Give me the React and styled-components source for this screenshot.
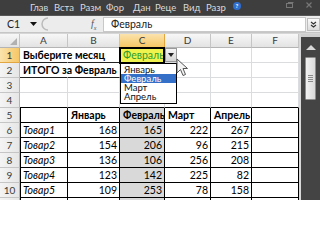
import React from 'react';
import styled, { createGlobalStyle } from 'styled-components';

const GlobalStyle = createGlobalStyle`
  html, body {
    margin: 0;
    padding: 0;
    width: 320px;
    height: 200px;
    overflow: hidden;
    background: #fff;
    font-family: Lato, 'Liberation Sans', Arial, sans-serif;
  }
`;

const Window = styled.div`
  width: 320px;
  height: 200px;
  display: flex;
  flex-direction: column;
  overflow: hidden;
`;

const TitleBar = styled.div`
  height: 16px;
  flex: none;
  background: #3e3e3e;
  border-bottom: 1px solid #575757;
  box-sizing: border-box;
  display: flex;
  align-items: center;
  padding-left: 30px;
  color: #d9d9d9;
  font-size: 9.5px;
`;

const Tab = styled.span`
  width: ${(p) => p.$w}px;
  white-space: nowrap;
`;

const HelpIcon = styled.span`
  width: 8px;
  height: 8px;
  border-radius: 50%;
  background: #2f6fd0;
  color: #fff;
  font-size: 6px;
  font-weight: 700;
  display: flex;
  align-items: center;
  justify-content: center;
  margin-left: 2px;
  margin-top: -4px;
`;

const WinControls = styled.div`
  margin-left: auto;
  margin-right: 8px;
  margin-top: -5px;
  display: flex;
  gap: 12px;
  align-items: center;
`;

const FormulaBar = styled.div`
  height: 17px;
  flex: none;
  background: #ececec;
  display: flex;
  align-items: center;
  box-sizing: border-box;
  border-bottom: 1px solid #c6c6c6;
  font-size: 10.5px;
`;

const NameBox = styled.div`
  width: 40px;
  height: 15px;
  display: flex;
  align-items: center;
  justify-content: space-between;
  padding: 0 3px 0 7px;
  box-sizing: border-box;
  color: #222;
`;

const Fx = styled.span`
  font-family: 'Liberation Serif', serif;
  font-style: italic;
  font-size: 10px;
  color: #555;
  margin-left: 41px;
  width: 12px;
`;

const FormulaInput = styled.div`
  width: 203px;
  height: 15px;
  background: #fff;
  border: 1px solid #c8c8c8;
  box-sizing: border-box;
  padding-left: 7px;
  line-height: 13px;
  color: #222;
`;

const ExpandBtn = styled.div`
  width: 13px;
  height: 13px;
  margin-left: 1px;
  background: linear-gradient(#fafafa, #dcdcdc);
  border: 1px solid #bdbdbd;
  box-sizing: border-box;
  display: flex;
  align-items: center;
  justify-content: center;
`;

const Body = styled.div`
  flex: 1;
  display: flex;
  padding-top: 1px;
  background: #d6d6d6;
`;

const Sheet = styled.div`
  position: relative;
  width: 299px;
  display: grid;
  grid-template-columns: 20px 48px 52px 45px 46px 41px 47px;
  grid-auto-rows: 15px;
  grid-template-rows: 14px;
  align-content: start;
  background: #fff;
  font-size: 10.5px;
`;

const ColHead = styled.div`
  box-sizing: border-box;
  border-right: 1px solid ${(p) => (p.$active ? '#e2a741' : '#c5c5c5')};
  border-bottom: 1px solid ${(p) => (p.$active ? '#e2a741' : '#b4b4b4')};
  background: ${(p) =>
    p.$active
      ? 'linear-gradient(#fbe3ad, #f6c766)'
      : 'linear-gradient(#f7f7f7, #e3e3e3)'};
  color: #3a3a3a;
  text-align: center;
  line-height: 13px;
  font-size: 10px;
  position: relative;
`;

const Corner = styled.span`
  position: absolute;
  right: 2px;
  bottom: 2px;
  width: 0;
  height: 0;
  border-left: 7px solid transparent;
  border-bottom: 7px solid #b1b1b1;
`;

const RowHead = styled.div`
  box-sizing: border-box;
  border-right: 1px solid ${(p) => (p.$active ? '#e2a741' : '#b4b4b4')};
  border-bottom: 1px solid ${(p) => (p.$active ? '#e2a741' : '#c5c5c5')};
  background: ${(p) =>
    p.$active
      ? 'linear-gradient(90deg, #fbe3ad, #f6c766)'
      : 'linear-gradient(90deg, #f4f4f4, #e6e6e6)'};
  color: #3a3a3a;
  text-align: center;
  line-height: 14px;
  font-size: 10px;
`;

const Cell = styled.div`
  box-sizing: border-box;
  border-right: 1px solid ${(p) => p.$rc || '#dadcdd'};
  border-bottom: 1px solid ${(p) => p.$bc || '#dadcdd'};
  box-shadow: ${(p) => (p.$lc ? `inset 1px 0 0 ${p.$lc}` : 'none')};
  background: ${(p) => p.$fill || '#fff'};
  color: ${(p) => p.$color || '#000'};
  font-weight: ${(p) => (p.$bold ? 700 : 400)};
  font-style: ${(p) => (p.$italic ? 'italic' : 'normal')};
  text-align: ${(p) => p.$align || 'left'};
  padding: 0 2px 0 3px;
  line-height: 15px;
  white-space: nowrap;
  overflow: ${(p) => (p.$spill ? 'visible' : 'hidden')};
  position: ${(p) => (p.$spill ? 'relative' : 'static')};
  z-index: ${(p) => (p.$spill ? 1 : 'auto')};
`;

const Selection = styled.div`
  position: absolute;
  left: 119px;
  top: 13px;
  width: 46px;
  height: 17px;
  border: 2px solid #000;
  box-sizing: border-box;
  pointer-events: none;
`;

const DropBtn = styled.div`
  position: absolute;
  left: 165px;
  top: 14px;
  width: 12px;
  height: 14px;
  box-sizing: border-box;
  border: 1px solid #9a9a9a;
  background: linear-gradient(#f5f5f5, #d4d4d4);
  display: flex;
  align-items: center;
  justify-content: center;
`;

const DropList = styled.div`
  position: absolute;
  left: 120px;
  top: 29px;
  width: 57px;
  height: 41px;
  box-sizing: border-box;
  border: 1px solid #000;
  background: #fff;
  padding-top: 1px;
  font-size: 9.5px;
`;

const DropItem = styled.div`
  height: 9px;
  line-height: 9px;
  padding-left: 3px;
  background: ${(p) => (p.$active ? '#3470c8' : 'transparent')};
  color: ${(p) => (p.$active ? '#fff' : '#111')};
`;

const Cursor = styled.svg`
  position: absolute;
  left: 176px;
  top: 24px;
  z-index: 2;
`;

const Gap = styled.div`
  width: 2px;
  background: #d8d8d8;
`;

const ScrollBar = styled.div`
  width: 19px;
  background: #444;
  display: flex;
  flex-direction: column;
  align-items: center;
  border-top: 3px solid #cfcfcf;
  box-sizing: border-box;
`;

const Arrow = styled.div`
  width: 0;
  height: 0;
  border-left: 5px solid transparent;
  border-right: 5px solid transparent;
  ${(p) =>
    p.$down
      ? 'border-top: 5px solid #d8d8d8; margin-top: auto; margin-bottom: 4px;'
      : 'border-bottom: 5px solid #d8d8d8; margin-top: 8px;'}
`;

const Thumb = styled.div`
  width: 11px;
  height: 43px;
  margin-top: 7px;
  border-radius: 1px;
  background: linear-gradient(90deg, #f1f1f1, #dadada);
  border: 1px solid #8e8e8e;
  box-sizing: border-box;
  display: flex;
  flex-direction: column;
  align-items: center;
  justify-content: center;
  gap: 1px;
`;

const Grip = styled.span`
  width: 5px;
  height: 1px;
  background: #8a8a8a;
`;

const cols = ['A', 'B', 'C', 'D', 'E', 'F'];
// ribbon tabs, widths taken from their spacing on the bar
const tabs = [
  ['Глав', 24],
  ['Вста', 26],
  ['Разм', 26],
  ['Фор', 27],
  ['Дан', 22],
  ['Реце', 28],
  ['Вид', 23],
  ['Разр', 25],
];
const data = [
  ['Товар1', 168, 165, 222, 267],
  ['Товар2', 154, 206, 96, 215],
  ['Товар3', 136, 106, 256, 208],
  ['Товар4', 123, 142, 225, 82],
  ['Товар5', 109, 253, 78, 158],
  ['Товар6', 181, 79, 118, 171],
];
const months = ['Январь', 'Февраль', 'Март', 'Апрель'];

const BLACK = '#000';

function dataRow(values, rowNum) {
  const cells = [];
  for (let c = 0; c < 6; c++) {
    const v = values[c];
    cells.push(
      <Cell
        key={`${rowNum}-${c}`}
        $rc={BLACK}
        $bc={BLACK}
        $lc={c === 0 ? BLACK : undefined}
        $fill={c === 2 ? '#d9d9d9' : undefined}
        $italic={rowNum > 5 && c === 0}
        $bold={rowNum === 5}
        $align={rowNum > 5 && c > 0 ? 'right' : 'left'}
      >
        {v ?? ''}
      </Cell>
    );
  }
  return cells;
}

export default function App() {
  const rows = [];
  for (let r = 1; r <= 11; r++) {
    rows.push(
      <RowHead key={`h${r}`} $active={r === 1}>
        {r}
      </RowHead>
    );
    if (r === 1 || r === 2) {
      rows.push(
        <Cell key={`${r}a`} $bold $spill $rc="transparent" $bc="#222">
          {r === 1 ? 'Выберите месяц' : 'ИТОГО за Февраль'}
        </Cell>,
        <Cell key={`${r}b`} $bc="#222" />,
        r === 1 ? (
          <Cell key="1c" $fill="#f0f24e" $color="#2f9a2f">
            Февраль
          </Cell>
        ) : (
          <Cell key="2c" />
        ),
        <Cell key={`${r}d`} />,
        <Cell key={`${r}e`} />,
        <Cell key={`${r}f`} />
      );
    } else if (r === 3 || r === 4) {
      cols.forEach((c) =>
        rows.push(<Cell key={`${r}${c}`} $bc={r === 4 ? BLACK : undefined} />)
      );
    } else if (r === 5) {
      rows.push(...dataRow(['', ...months, ''], 5));
    } else {
      rows.push(...dataRow(data[r - 6], r));
    }
  }

  return (
    <>
      <GlobalStyle />
      <Window>
        <TitleBar>
          {tabs.map(([t, w]) => (
            <Tab key={t} $w={w}>
              {t}
            </Tab>
          ))}
          <HelpIcon>?</HelpIcon>
          <WinControls>
            <svg width="8" height="6" viewBox="0 0 8 6">
              <rect x="0.5" y="1.5" width="6" height="4" fill="none" stroke="#777" />
              <line x1="2" y1="0.5" x2="7.5" y2="0.5" stroke="#777" />
            </svg>
            <svg width="6" height="6" viewBox="0 0 6 6">
              <path d="M0.5 0.5 L5.5 5.5 M5.5 0.5 L0.5 5.5" stroke="#777" strokeWidth="1.2" />
            </svg>
          </WinControls>
        </TitleBar>
        <FormulaBar>
          <NameBox>
            C1
            <svg width="7" height="4" viewBox="0 0 7 4">
              <path d="M0 0 H7 L3.5 4 Z" fill="#111" />
            </svg>
          </NameBox>
          <svg width="10" height="14" viewBox="0 0 10 14">
            <path d="M8 1 A6 6 0 0 0 8 13" fill="none" stroke="#bbb" strokeWidth="1.5" />
          </svg>
          <Fx>
            f<sub style={{ fontSize: '6px' }}>x</sub>
          </Fx>
          <FormulaInput>Февраль</FormulaInput>
          <ExpandBtn>
            <svg width="7" height="7" viewBox="0 0 7 7">
              <path d="M1 1 L3.5 3 L6 1 M1 4 L3.5 6 L6 4" fill="none" stroke="#333" strokeWidth="1.2" />
            </svg>
          </ExpandBtn>
        </FormulaBar>
        <Body>
          <Sheet>
            <ColHead>
              <Corner />
            </ColHead>
            {cols.map((c) => (
              <ColHead key={c} $active={c === 'C'}>
                {c}
              </ColHead>
            ))}
            {rows}
            <Selection />
            <DropBtn>
              <svg width="6" height="4" viewBox="0 0 6 4">
                <path d="M0 0 H6 L3 4 Z" fill="#222" />
              </svg>
            </DropBtn>
            <DropList>
              {months.map((m) => (
                <DropItem key={m} $active={m === 'Февраль'}>
                  {m}
                </DropItem>
              ))}
            </DropList>
            <Cursor width="13" height="20" viewBox="0 0 13 20">
              <path
                d="M1 1 L1 15 L4.5 11.5 L7 17.5 L9.5 16.5 L7 10.5 L11.5 10.5 Z"
                fill="#f4f4f4"
                stroke="#555"
                strokeWidth="1"
                strokeLinejoin="round"
              />
            </Cursor>
          </Sheet>
          <Gap />
          <ScrollBar>
            <Arrow />
            <Thumb>
              <Grip />
              <Grip />
              <Grip />
              <Grip />
            </Thumb>
            <Arrow $down />
          </ScrollBar>
        </Body>
      </Window>
    </>
  );
}
